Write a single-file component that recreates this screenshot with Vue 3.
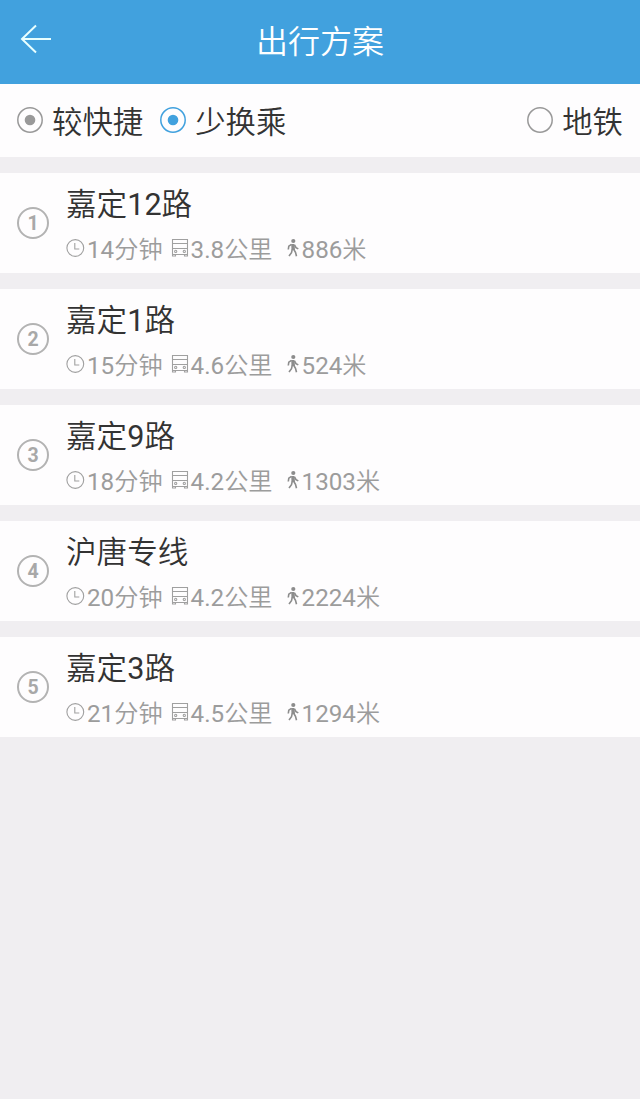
<template>
  <div class="page">
    <header class="header">
      <svg class="back" viewBox="0 0 32 30" width="32" height="30">
        <path d="M31 15H2M16 1.500L2 15l14 13.500" />
      </svg>
      <h1>出行方案</h1>
    </header>

    <div class="filters">
      <label v-for="f in filters" :key="f.label" class="filter" :class="f.state">
        <svg class="radio" viewBox="0 0 26 26" width="26" height="26">
          <circle cx="13" cy="13" r="12.2" />
          <circle v-if="f.state !== 'last'" class="dot" cx="13" cy="13" r="5.3" />
        </svg>
        <span class="label">{{ f.label }}</span>
      </label>
    </div>

    <ul class="routes">
      <li v-for="(r, i) in routes" :key="i" class="route">
        <span class="index">{{ i + 1 }}</span>
        <div class="body">
          <div class="name">{{ r.area }}<b v-if="r.line">{{ r.line }}</b>{{ r.line ? '路' : '' }}</div>
          <div class="meta">
            <span class="item time">
              <svg viewBox="0 0 21 20" width="21" height="20">
                <circle cx="9.3" cy="10" r="8.4" />
                <path d="M8.800 5v6h4.500" />
              </svg>
              <span><b>{{ r.minutes }}</b>分钟</span>
            </span>
            <span class="item ride">
              <svg viewBox="0 0 20 20" width="20" height="20">
                <path d="M1.500 1.500h15v15h-15zM1.500 5.500h15M1.500 10.500h15M1.500 16.500v1.500h3v-1.500M13.500 16.500v1.500h3v-1.500" />
                <circle cx="4.7" cy="13.4" r="1.1" />
                <circle cx="13.3" cy="13.4" r="1.1" />
              </svg>
              <span><b>{{ r.distance }}</b>公里</span>
            </span>
            <span class="item walk">
              <svg viewBox="0 0 16 20" width="16" height="20">
                <circle class="head" cx="7.3" cy="3" r="2.1" />
                <path class="torso" d="M5.200 6h3.300l.5 6H5.500z" />
                <path class="limb" d="M5.500 6.300L2.800 8.200l-.5 3.300M8.500 6.800l1.500 2.800 2.300 1.300M6.200 11.500l-.7 3.200-2.500 3.300M7.800 11.500l1.700 2.800 1 3.900" />
              </svg>
              <span><b>{{ r.walk }}</b>米</span>
            </span>
          </div>
        </div>
      </li>
    </ul>
  </div>
</template>

<script setup>
const filters = [
  { label: '较快捷', state: 'muted' },
  { label: '少换乘', state: 'active' },
  { label: '地铁', state: 'last' }
];

const routes = [
  { area: '嘉定', line: '12', minutes: 14, distance: '3.8', walk: 886 },
  { area: '嘉定', line: '1', minutes: 15, distance: '4.6', walk: 524 },
  { area: '嘉定', line: '9', minutes: 18, distance: '4.2', walk: 1303 },
  { area: '沪唐专线', minutes: 20, distance: '4.2', walk: 2224 },
  { area: '嘉定', line: '3', minutes: 21, distance: '4.5', walk: 1294 }
];
</script>

<style>
body {
  background: #f0eef1;
}
</style>

<style scoped>
.page {
  min-height: 1099px;
  background: #f0eef1;
  color: #333;
  font-family: Roboto, 'Noto Sans CJK SC', sans-serif;
  font-weight: 350;
}

/* digits are a touch heavier than the Chinese text */
b {
  font-weight: 400;
}

.header {
  display: grid;
  grid-template-columns: 60px 1fr 60px;
  align-items: center;
  height: 84px;
  background: #41a1de;
  color: #fff;
}

.back {
  margin-left: 20px;
  margin-top: -6px;
  fill: none;
  stroke: #e8ffff;
  stroke-width: 2;
}

.header h1 {
  margin: 0;
  text-align: center;
  font-size: 32px;
  font-weight: 350;
  line-height: 82px;
}

.filters {
  display: flex;
  height: 73px;
  padding: 0 17px;
  gap: 17px;
  background: #fefdfe;
}

.filter {
  display: flex;
  align-items: center;
  gap: 9px;
  font-size: 30.4px;
}

.filter.last {
  margin-left: auto;
}

.label {
  padding-bottom: 2px;
}

.radio {
  margin-top: -1px;
  fill: none;
  stroke: #999;
  stroke-width: 1.5;
}

.dot {
  fill: #999;
  stroke: none;
}

.active .radio {
  stroke: #41a1de;
}

.active .dot {
  fill: #41a1de;
}

.routes {
  display: flex;
  flex-direction: column;
  gap: 16px;
  margin: 0;
  padding: 16px 0 0;
  list-style: none;
}

.route {
  display: flex;
  align-items: center;
  height: 100px;
  padding-left: 17px;
  background: #fefdfe;
}

.index {
  box-sizing: border-box;
  width: 32px;
  height: 32px;
  margin-right: 17px;
  border: 2px solid #b3b3b3;
  border-radius: 50%;
  color: #a8a8a8;
  font-size: 19.5px;
  font-weight: 700;
  line-height: 29px;
  text-align: center;
}

.body {
  padding-top: 7px;
}

.name {
  font-size: 30.6px;
  line-height: 46px;
}

.meta {
  display: flex;
  color: #9c9c9c;
  font-size: 24.2px;
  line-height: 44px;
}

.item {
  display: flex;
  align-items: center;
}

.ride {
  margin-left: 8px;
}

.walk {
  margin-left: 13px;
}

.item svg {
  margin-top: -3px;
  fill: none;
  stroke: #a0a0a0;
  stroke-width: 1.1;
}

.item .head,
.item .torso {
  fill: #8c8c8c;
  stroke: none;
}

.item .limb {
  stroke: #8c8c8c;
  stroke-width: 1.6;
}
</style>
